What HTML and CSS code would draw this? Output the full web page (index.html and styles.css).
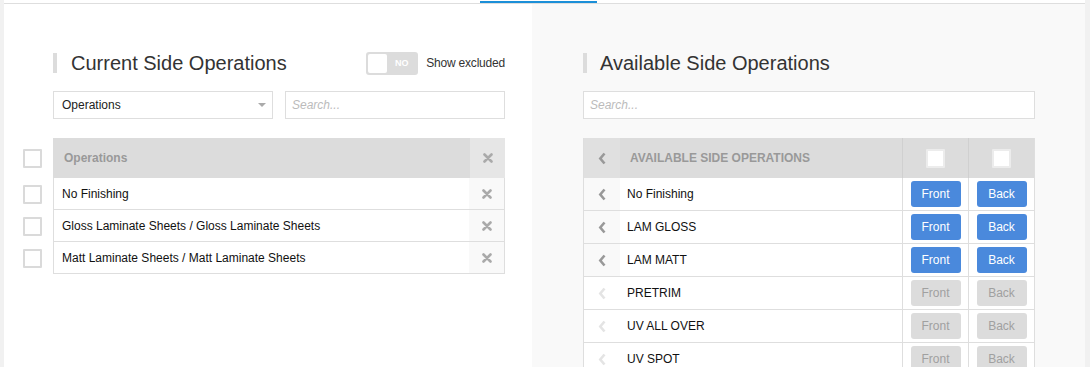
FILE: index.html
```html
<!DOCTYPE html>
<html lang="en">
<head>
    <meta charset="UTF-8">
    <meta name="viewport" content="width=device-width, initial-scale=1.0">
    <title>Side Operations</title>
    <link rel="stylesheet" href="styles.css">
</head>
<body>
<div class="frame">
    <div class="edge"></div>
    <div class="main">
        <!-- Tab strip, active tab underlined -->
        <div class="tabs"><div class="tab-active"></div></div>

        <div class="panels">
            <!-- Current side operations -->
            <section class="panel current">
                <div class="panel-head">
                    <h2 class="panel-title">Current Side Operations</h2>
                    <div class="toggle-wrap">
                        <span class="toggle"><span class="knob"></span><span class="toggle-label">NO</span></span>
                        <span class="toggle-text">Show excluded</span>
                    </div>
                </div>
                <div class="filters">
                    <div class="select">Operations<span class="caret"></span></div>
                    <div class="search">Search...</div>
                </div>
                <div class="op-list">
                    <div class="op-row op-head">
                        <span class="check-cell"><span class="checkbox"></span></span>
                        <div class="op-body">
                            <span class="op-name">Operations</span>
                            <span class="op-remove"><svg width="10" height="10" viewBox="0 0 10 10"><path d="M1.5 1.5 L8.5 8.5 M8.5 1.5 L1.5 8.5" stroke="#aaa" stroke-width="2.6" stroke-linecap="round"/></svg></span>
                        </div>
                    </div>
                    <div class="op-row">
                        <span class="check-cell"><span class="checkbox"></span></span>
                        <div class="op-body">
                            <span class="op-name">No Finishing</span>
                            <span class="op-remove"><svg width="10" height="10" viewBox="0 0 10 10"><path d="M1.5 1.5 L8.5 8.5 M8.5 1.5 L1.5 8.5" stroke="#aaa" stroke-width="2.6" stroke-linecap="round"/></svg></span>
                        </div>
                    </div>
                    <div class="op-row">
                        <span class="check-cell"><span class="checkbox"></span></span>
                        <div class="op-body">
                            <span class="op-name">Gloss Laminate Sheets / Gloss Laminate Sheets</span>
                            <span class="op-remove"><svg width="10" height="10" viewBox="0 0 10 10"><path d="M1.5 1.5 L8.5 8.5 M8.5 1.5 L1.5 8.5" stroke="#aaa" stroke-width="2.6" stroke-linecap="round"/></svg></span>
                        </div>
                    </div>
                    <div class="op-row">
                        <span class="check-cell"><span class="checkbox"></span></span>
                        <div class="op-body">
                            <span class="op-name">Matt Laminate Sheets / Matt Laminate Sheets</span>
                            <span class="op-remove"><svg width="10" height="10" viewBox="0 0 10 10"><path d="M1.5 1.5 L8.5 8.5 M8.5 1.5 L1.5 8.5" stroke="#aaa" stroke-width="2.6" stroke-linecap="round"/></svg></span>
                        </div>
                    </div>
                </div>
            </section>

            <!-- Available side operations -->
            <section class="panel available">
                <div class="panel-head">
                    <h2 class="panel-title">Available Side Operations</h2>
                </div>
                <div class="filters">
                    <div class="search">Search...</div>
                </div>
                <div class="avail-table">
                    <div class="avail-row avail-head">
                        <span class="cell-arrow"><svg width="9" height="13" viewBox="0 0 9 13"><path d="M6.5 1.5 L2.3 6.5 L6.5 11.5" fill="none" stroke="#999" stroke-width="2.6"/></svg></span>
                        <span class="cell-name">AVAILABLE SIDE OPERATIONS</span>
                        <span class="cell-btn"><span class="checkbox"></span></span>
                        <span class="cell-btn"><span class="checkbox"></span></span>
                    </div>
                    <div class="avail-row">
                        <span class="cell-arrow"><svg width="9" height="13" viewBox="0 0 9 13"><path d="M6.5 1.5 L2.3 6.5 L6.5 11.5" fill="none" stroke="#999" stroke-width="2.6"/></svg></span>
                        <span class="cell-name">No Finishing</span>
                        <span class="cell-btn"><span class="side-btn">Front</span></span>
                        <span class="cell-btn"><span class="side-btn">Back</span></span>
                    </div>
                    <div class="avail-row">
                        <span class="cell-arrow"><svg width="9" height="13" viewBox="0 0 9 13"><path d="M6.5 1.5 L2.3 6.5 L6.5 11.5" fill="none" stroke="#999" stroke-width="2.6"/></svg></span>
                        <span class="cell-name">LAM GLOSS</span>
                        <span class="cell-btn"><span class="side-btn">Front</span></span>
                        <span class="cell-btn"><span class="side-btn">Back</span></span>
                    </div>
                    <div class="avail-row">
                        <span class="cell-arrow"><svg width="9" height="13" viewBox="0 0 9 13"><path d="M6.5 1.5 L2.3 6.5 L6.5 11.5" fill="none" stroke="#999" stroke-width="2.6"/></svg></span>
                        <span class="cell-name">LAM MATT</span>
                        <span class="cell-btn"><span class="side-btn">Front</span></span>
                        <span class="cell-btn"><span class="side-btn">Back</span></span>
                    </div>
                    <div class="avail-row off">
                        <span class="cell-arrow"><svg width="9" height="13" viewBox="0 0 9 13"><path d="M6.5 1.5 L2.3 6.5 L6.5 11.5" fill="none" stroke="#e4e4e4" stroke-width="2.6"/></svg></span>
                        <span class="cell-name">PRETRIM</span>
                        <span class="cell-btn"><span class="side-btn">Front</span></span>
                        <span class="cell-btn"><span class="side-btn">Back</span></span>
                    </div>
                    <div class="avail-row off">
                        <span class="cell-arrow"><svg width="9" height="13" viewBox="0 0 9 13"><path d="M6.5 1.5 L2.3 6.5 L6.5 11.5" fill="none" stroke="#e4e4e4" stroke-width="2.6"/></svg></span>
                        <span class="cell-name">UV ALL OVER</span>
                        <span class="cell-btn"><span class="side-btn">Front</span></span>
                        <span class="cell-btn"><span class="side-btn">Back</span></span>
                    </div>
                    <div class="avail-row off">
                        <span class="cell-arrow"><svg width="9" height="13" viewBox="0 0 9 13"><path d="M6.5 1.5 L2.3 6.5 L6.5 11.5" fill="none" stroke="#e4e4e4" stroke-width="2.6"/></svg></span>
                        <span class="cell-name">UV SPOT</span>
                        <span class="cell-btn"><span class="side-btn">Front</span></span>
                        <span class="cell-btn"><span class="side-btn">Back</span></span>
                    </div>
                </div>
            </section>
        </div>
    </div>
    <div class="edge"></div>
</div>
</body>
</html>
```

FILE: styles.css
```css
body {
    margin: 0;
    height: 367px;
    overflow: hidden;
    font-family: "Liberation Sans", Arial, sans-serif;
    font-size: 12px;
    color: #111;
    background-color: #fff;
}
.frame {
    display: flex;
    height: 367px;
}
.edge {
    width: 4px;
    background-color: #f1f1f1;
}
.edge:last-child {
    width: 5px;
}
.main {
    flex: 1;
    display: flex;
    flex-direction: column;
    min-width: 0;
}
.tabs {
    height: 4px;
    padding-top: 1px;
    border-bottom: 1px solid #dedede;
    box-sizing: border-box;
}
.tab-active {
    margin-left: 476px;
    width: 117px;
    height: 2px;
    background-color: #1b8fd8;
}
.panels {
    flex: 1;
    display: flex;
}
.panel {
    box-sizing: border-box;
    padding-top: 47px;
}
.current {
    width: 528px;
    padding-left: 49px;
    padding-right: 27px;
    background-color: #fff;
}
.available {
    flex: 1;
    padding-left: 51px;
    padding-right: 50px;
    background-color: #f9f9f9;
}
.panel-head {
    display: flex;
    align-items: center;
    height: 24px;
}
.panel-title {
    margin: 0;
    border-left: 4px solid #dcdcdc;
    padding-left: 14px;
    font-size: 20px;
    line-height: 20px;
    font-weight: normal;
    color: #333;
}
.available .panel-title {
    padding-left: 13px;
}
.toggle-wrap {
    margin-left: auto;
    display: flex;
    align-items: center;
}
.toggle {
    display: flex;
    align-items: center;
    width: 52px;
    height: 23px;
    padding: 2px;
    box-sizing: border-box;
    border-radius: 3px;
    background-color: #dcdcdc;
}
.knob {
    width: 19px;
    height: 19px;
    border-radius: 2px;
    background-color: #fff;
}
.toggle-label {
    flex: 1;
    text-align: center;
    color: #fff;
    font-size: 9px;
    font-weight: bold;
}
.toggle-text {
    margin-left: 8px;
    letter-spacing: -0.2px;
    color: #333;
}
.filters {
    display: flex;
    gap: 12px;
    margin-top: 16px;
}
.select, .search {
    height: 28px;
    box-sizing: border-box;
    border: 1px solid #dedede;
    background-color: #fff;
    display: flex;
    align-items: center;
}
.select {
    width: 220px;
    padding-left: 8px;
    color: #222;
}
.caret {
    margin-left: auto;
    margin-right: 6px;
    border-left: 4px solid transparent;
    border-right: 4px solid transparent;
    border-top: 4px solid #aaa;
}
.search {
    flex: 1;
    padding-left: 6px;
    font-style: italic;
    color: #bbb;
}
.op-list {
    margin-top: 19px;
    margin-left: -30px;
}
.op-row {
    display: flex;
    height: 32px;
}
.check-cell {
    width: 30px;
    display: flex;
    align-items: center;
}
.checkbox {
    width: 19px;
    height: 19px;
    box-sizing: border-box;
    border: 2px solid #dadada;
    border-radius: 1px;
    background-color: #fff;
}
.op-body {
    flex: 1;
    display: flex;
    border: 1px solid #dedede;
    border-top: none;
}
.op-name {
    flex: 1;
    display: flex;
    align-items: center;
    padding-left: 8px;
}
.op-remove {
    width: 35px;
    display: flex;
    align-items: center;
    justify-content: center;
    background-color: #f9f9f9;
}
.op-head {
    height: 40px;
}
.op-head .op-body {
    border: none;
    background-color: #dcdcdc;
}
.op-head .op-name {
    padding-left: 11px;
    font-weight: bold;
    color: #999;
}
.op-head .op-remove {
    background-color: #e6e6e6;
}
.avail-table {
    margin-top: 19px;
    border-left: 1px solid #dedede;
    border-right: 1px solid #dedede;
}
.avail-row {
    display: grid;
    grid-template-columns: 36px 1fr 66px 66px;
    height: 32px;
    border-bottom: 1px solid #dedede;
    background-color: #fff;
}
.cell-arrow {
    display: flex;
    align-items: center;
    justify-content: center;
    background-color: #f9f9f9;
}
.cell-name {
    display: flex;
    align-items: center;
    padding-left: 7px;
}
.cell-btn {
    display: flex;
    align-items: center;
    justify-content: center;
    border-left: 1px solid #dedede;
}
.side-btn {
    width: 50px;
    height: 26px;
    border-radius: 3px;
    background-color: #4a89dc;
    color: #fff;
    display: flex;
    align-items: center;
    justify-content: center;
}
.off .side-btn {
    background-color: #dcdcdc;
    color: #a0a0a0;
}
.off .cell-arrow {
    background-color: #fff;
}
.avail-head {
    height: 40px;
    border-bottom: none;
    background-color: #dcdcdc;
}
.avail-head .cell-arrow {
    background-color: #e0e0e0;
}
.avail-head .cell-name {
    padding-left: 10px;
    font-weight: bold;
    color: #999;
}
.avail-head .cell-btn {
    border-left-color: #d0d0d0;
}
.avail-head .checkbox {
    border-color: #ececec;
}
```
